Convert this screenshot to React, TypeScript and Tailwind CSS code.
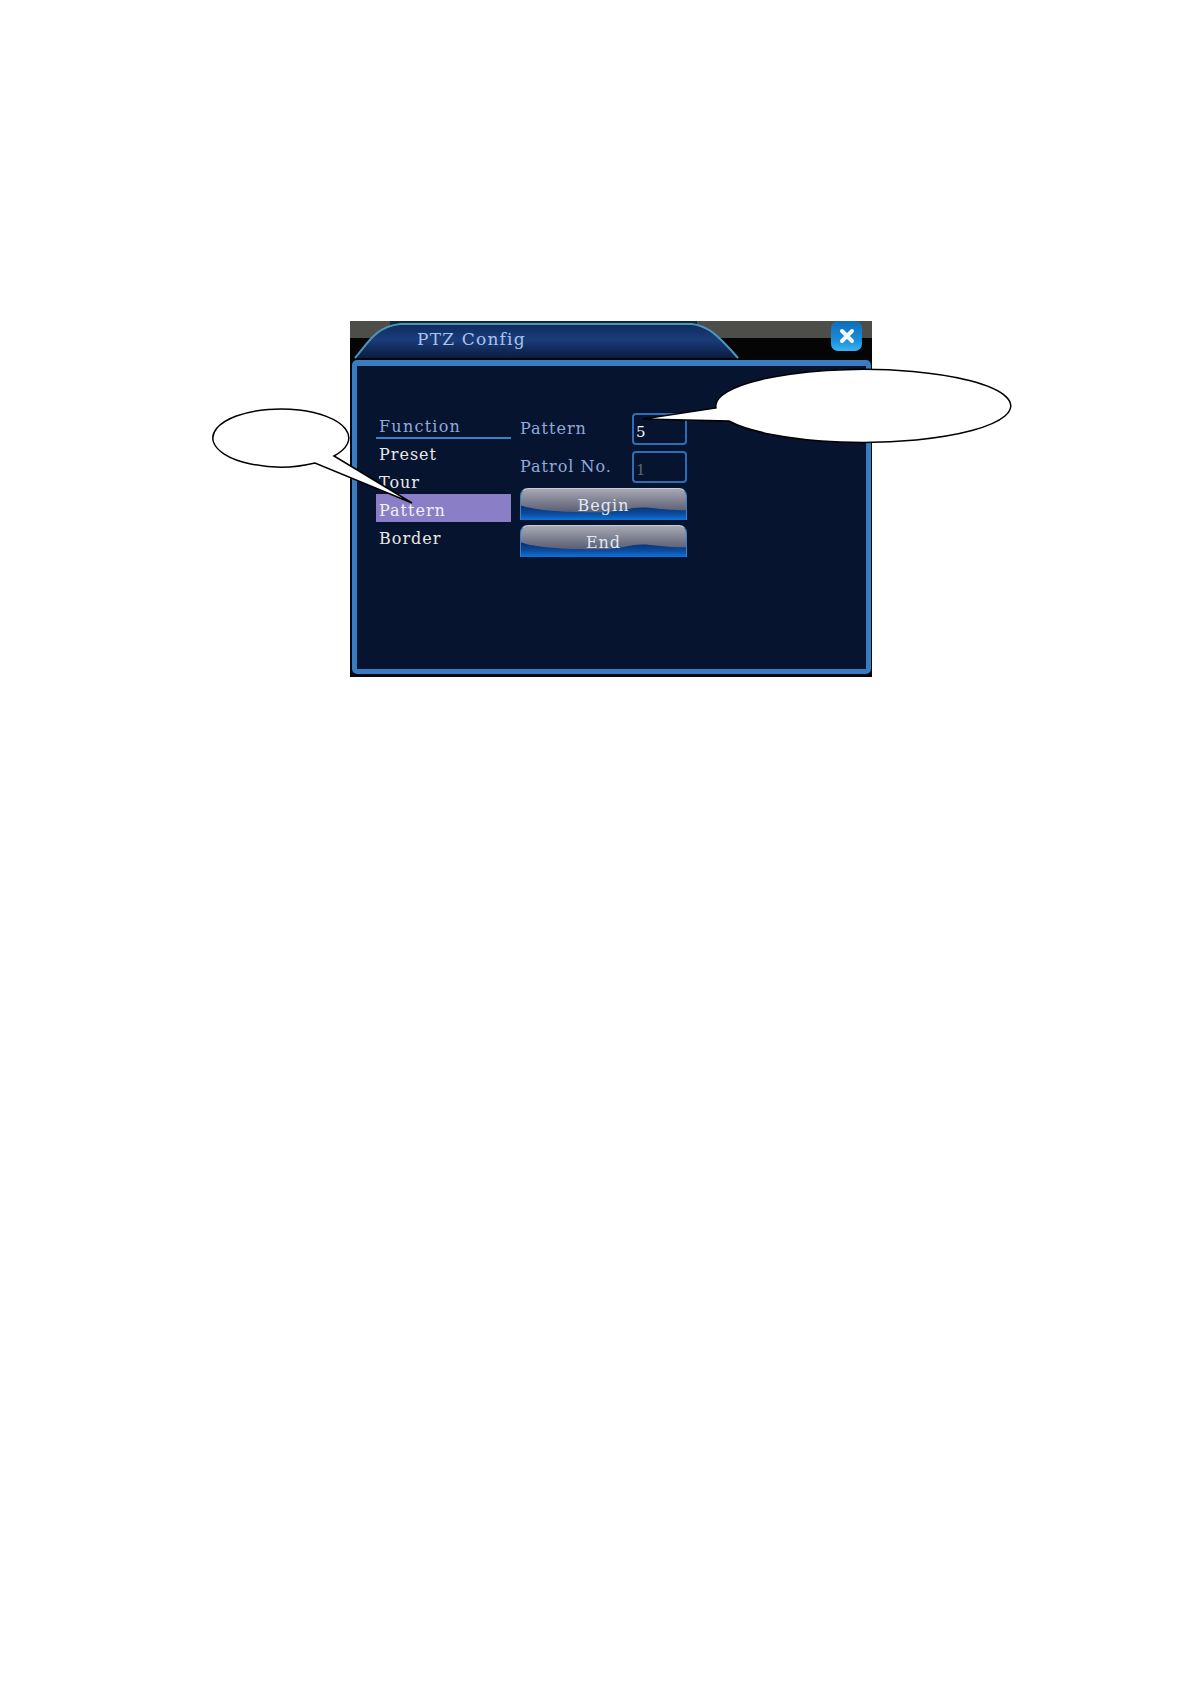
const menuItems = [
  { label: "Preset", active: false },
  { label: "Tour", active: false },
  { label: "Pattern", active: true },
  { label: "Border", active: false },
];

function DialogButton({ label }: { label: string }) {
  return (
    <div className="relative h-[32px] w-[167px] overflow-hidden rounded-t-[8px] border-x border-t border-x-[#3a7fd0] border-t-[#c9ccd4] bg-[linear-gradient(180deg,#a6a8b3_0%,#5f6276_70%)]">
      <svg className="absolute inset-0 h-full w-full" viewBox="0 0 167 32" preserveAspectRatio="none">
        <defs>
          <linearGradient id="waveFill" x1="0" y1="0" x2="0" y2="1">
            <stop offset="0" stopColor="#08306e" />
            <stop offset="0.55" stopColor="#0b4a9c" />
            <stop offset="1" stopColor="#0f74da" />
          </linearGradient>
        </defs>
        <path
          d="M0 17 C15 22 40 24 80 24 C100 24 110 19 122 19 C135 19 145 22 167 22 L167 32 L0 32 Z"
          fill="url(#waveFill)"
        />
      </svg>
      <span className="relative flex h-full items-start justify-center pt-[3px] text-[16px] leading-[28px] tracking-[1px] text-[#dfe8f5]">
        {label}
      </span>
    </div>
  );
}

function ValueBox({ value, dim }: { value: string; dim?: boolean }) {
  return (
    <div
      className={
        "h-[32px] w-[55px] rounded-[4px] border-2 border-[#2f6db4] pl-[2px] pt-[6px] text-[15px] leading-[22px] " +
        (dim ? "text-[#5b6472]" : "text-[#f1f3f6]")
      }
    >
      {value}
    </div>
  );
}

export default function App() {
  return (
    <div className="relative h-[1684px] w-[1191px] overflow-hidden bg-white pl-[350px] pt-[321px] font-['DejaVu_Serif',serif]">
      <div className="flex h-[356px] w-[522px] flex-col bg-[#03070f]">
        {/* title bar */}
        <div className="relative h-[39px] shrink-0 bg-[linear-gradient(180deg,#4d4e49_0%,#4d4e49_44%,#050505_44%,#050505_100%)]">
          <svg className="absolute left-0 top-0 h-[39px] w-[392px]" viewBox="0 0 392 39">
            <defs>
              <linearGradient id="tabFill" x1="0" y1="0" x2="0" y2="1">
                <stop offset="0" stopColor="#0f2a5c" />
                <stop offset="0.45" stopColor="#1a3d7a" />
                <stop offset="1" stopColor="#0b1c40" />
              </linearGradient>
            </defs>
            <rect x="40" y="0" width="307" height="4" fill="#0a2a35" />
            <path d="M5 37 C17 24 24 6 50 3 L342 3 C358 5 368 14 388 37 Z" fill="url(#tabFill)" />
            <path
              d="M5 37 C17 24 24 6 50 3 L342 3 C358 5 368 14 388 37"
              fill="none"
              stroke="#4f93b8"
              strokeWidth="2"
            />
          </svg>
          <span className="absolute left-[67px] top-[5px] text-[17px] leading-[26px] tracking-[1.2px] text-[#a9c3ef]">
            PTZ Config
          </span>
          <div className="absolute left-[481px] top-0 flex h-[30px] w-[31px] items-center justify-center rounded-[7px] bg-[linear-gradient(180deg,#0f6cb8_0%,#1c8fdc_65%,#3cb2f0_100%)] pb-[1px]">
            <svg width="16" height="16" viewBox="0 0 16 16">
              <path d="M3 3 L13 13 M13 3 L3 13" stroke="#f4f7fa" strokeWidth="4" strokeLinecap="round" />
            </svg>
          </div>
        </div>

        {/* panel */}
        <div className="mb-[3px] ml-[2px] mr-[1px] flex flex-1 gap-[9px] rounded-[5px] border-[5px] border-t-[6px] border-[#3a7cc0] bg-[#07142f] pl-[19px] pt-[48px]">
          <div className="w-[135px]">
            <div className="h-[25px] border-b-2 border-[#3b7fc4] pl-[3px] pt-[1px] text-[16px] leading-[24px] tracking-[1.25px] text-[#90a9dc]">
              Function
            </div>
            <div className="-mt-[1px] flex flex-col">
              {menuItems.map((item) => (
                <div
                  key={item.label}
                  className={
                    "h-[28px] pl-[3px] pt-[3px] text-[16px] leading-[27px] tracking-[1px] " +
                    (item.active ? "bg-[#8a7fc6] text-[#f0f0f8]" : "text-[#e8e9e6]")
                  }
                >
                  {item.label}
                </div>
              ))}
            </div>
          </div>
          <div className="-mt-[1px] flex w-[167px] flex-col">
            <div className="flex h-[32px] items-start justify-between">
              <span className="pt-[4px] text-[16px] leading-[24px] tracking-[1px] text-[#90a9dc]">Pattern</span>
              <ValueBox value="5" />
            </div>
            <div className="mt-[6px] flex h-[32px] items-start justify-between">
              <span className="pt-[4px] text-[16px] leading-[24px] tracking-[1px] text-[#90a9dc]">Patrol No.</span>
              <ValueBox value="1" dim />
            </div>
            <div className="mt-[5px] flex flex-col gap-[5px]">
              <DialogButton label="Begin" />
              <DialogButton label="End" />
            </div>
          </div>
        </div>
      </div>

      {/* callouts over the screenshot */}
      <svg className="absolute left-0 top-0 h-[1684px] w-[1191px]" viewBox="0 0 1191 1684">
        <path
          d="M334 456 A68 29 0 1 0 315 463 L412 503 Z"
          fill="#ffffff"
          stroke="#000000"
          strokeWidth="1.5"
        />
        <path
          d="M716 408 A147.5 36.5 0 1 1 729 421 L643 419 Z"
          fill="#ffffff"
          stroke="#000000"
          strokeWidth="1.5"
        />
      </svg>
    </div>
  );
}
